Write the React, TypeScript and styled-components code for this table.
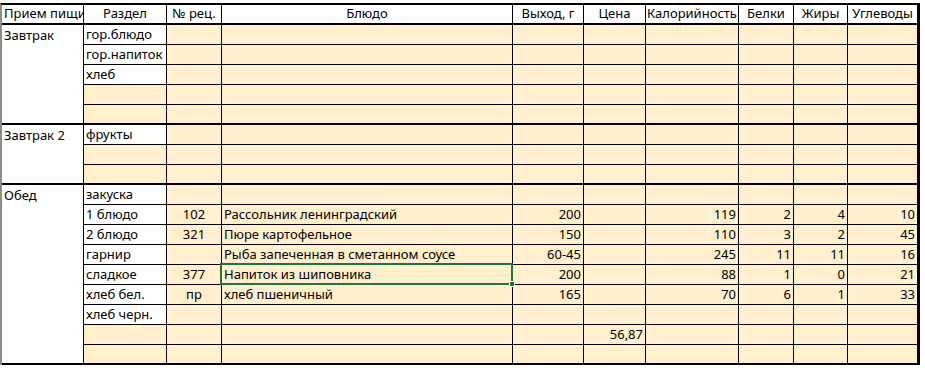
import React from "react";
import styled, { createGlobalStyle } from "styled-components";

type Row = {
    section?: string;
    sectionFilled?: boolean;
    rec?: string;
    dish?: string;
    out?: string;
    price?: string;
    kcal?: string;
    prot?: string;
    fat?: string;
    carb?: string;
    selected?: boolean;
};

type Meal = { name: string; rows: Row[] };

const MEALS: Meal[] = [
    {
        name: "Завтрак",
        rows: [
            { section: "гор.блюдо" },
            { section: "гор.напиток" },
            { section: "хлеб" },
            { sectionFilled: true },
            { sectionFilled: true },
        ],
    },
    {
        name: "Завтрак 2",
        rows: [{ section: "фрукты" }, { sectionFilled: true }, { sectionFilled: true }],
    },
    {
        name: "Обед",
        rows: [
            { section: "закуска" },
            { section: "1 блюдо", rec: "102", dish: "Рассольник ленинградский", out: "200", kcal: "119", prot: "2", fat: "4", carb: "10" },
            { section: "2 блюдо", rec: "321", dish: "Пюре картофельное", out: "150", kcal: "110", prot: "3", fat: "2", carb: "45" },
            { section: "гарнир", dish: "Рыба запеченная в сметанном соусе", out: "60-45", kcal: "245", prot: "11", fat: "11", carb: "16" },
            { section: "сладкое", rec: "377", dish: "Напиток из шиповника", out: "200", kcal: "88", prot: "1", fat: "0", carb: "21", selected: true },
            { section: "хлеб бел.", rec: "пр", dish: "хлеб пшеничный", out: "165", kcal: "70", prot: "6", fat: "1", carb: "33" },
            { section: "хлеб черн." },
            { sectionFilled: true, price: "56,87" },
            { sectionFilled: true },
        ],
    },
];

const HEADERS = ["Раздел", "№ рец.", "Блюдо", "Выход, г", "Цена", "Калорийность", "Белки", "Жиры", "Углеводы"];

const GlobalStyle = createGlobalStyle`
    body {
        margin: 0;
        background: #ffffff;
        font-family: "Noto Sans", "Open Sans", sans-serif;
    }
`;

const App = () => {
    return (
        <>
            <GlobalStyle />
            <Sheet>
                <Cell $align="left" $thick>Прием пищи</Cell>
                {HEADERS.map((h, i) => (
                    <Cell key={h} $align="center" $thick $last={i === HEADERS.length - 1}>
                        {h}
                    </Cell>
                ))}
                {MEALS.map(meal => (
                    <React.Fragment key={meal.name}>
                        <MealCell $span={meal.rows.length}>{meal.name}</MealCell>
                        {meal.rows.map((r, i) => {
                            const thick = i === meal.rows.length - 1;
                            return (
                                <React.Fragment key={i}>
                                    <Cell $fill={!!r.sectionFilled} $thick={thick}>{r.section}</Cell>
                                    <Cell $fill $align="center" $thick={thick}>{r.rec}</Cell>
                                    <Cell $fill $thick={thick}>
                                        {r.dish}
                                        {r.selected && (
                                            <Selection>
                                                <Handle />
                                            </Selection>
                                        )}
                                    </Cell>
                                    <Cell $fill $align="right" $thick={thick}>{r.out}</Cell>
                                    <Cell $fill $align="right" $thick={thick}>{r.price}</Cell>
                                    <Cell $fill $align="right" $thick={thick}>{r.kcal}</Cell>
                                    <Cell $fill $align="right" $thick={thick}>{r.prot}</Cell>
                                    <Cell $fill $align="right" $thick={thick}>{r.fat}</Cell>
                                    <Cell $fill $align="right" $thick={thick} $last>{r.carb}</Cell>
                                </React.Fragment>
                            );
                        })}
                    </React.Fragment>
                ))}
            </Sheet>
        </>
    );
};

export default App;

const Sheet = styled.div`
    display: grid;
    grid-template-columns: 82px 83px 55px 291px 71px 62px 93px 55px 54px 69px;
    grid-auto-rows: 20px;
    width: 920px;
    box-sizing: border-box;
    margin-top: 3px;
    border-top: 2px solid #000;
    border-right: 3px solid #000;
    border-left: 2px solid #8c8c8c;
`;

const Cell = styled.div<{ $align?: "left" | "center" | "right"; $fill?: boolean; $thick?: boolean; $last?: boolean }>`
    position: relative;
    box-sizing: border-box;
    display: flex;
    align-items: flex-end;
    justify-content: ${p => (p.$align === "center" ? "center" : p.$align === "right" ? "flex-end" : "flex-start")};
    padding: 0 2px 1px 2px;
    font-size: 13px;
    line-height: 18px;
    color: #000;
    white-space: nowrap;
    background: ${p => (p.$fill ? "#ffefcc" : "#ffffff")};
    border-right: ${p => (p.$last ? "none" : "1px solid #000")};
    border-bottom: ${p => (p.$thick ? "2px solid #000" : "1px solid #000")};
`;

const MealCell = styled.div<{ $span: number }>`
    grid-column: 1;
    grid-row: span ${p => p.$span};
    box-sizing: border-box;
    padding: 1px 2px 0 2px;
    font-size: 13px;
    line-height: 18px;
    color: #000;
    white-space: nowrap;
    background: #ffffff;
    border-right: 1px solid #000;
    border-bottom: 2px solid #000;
`;

const Selection = styled.div`
    position: absolute;
    z-index: 2;
    left: -2px;
    top: -2px;
    right: -1px;
    bottom: -1px;
    border: 2px solid #217346;
    pointer-events: none;
`;

const Handle = styled.div`
    position: absolute;
    right: -4px;
    bottom: -4px;
    width: 6px;
    height: 6px;
    background: #217346;
    border: 1px solid #ffffff;
    box-sizing: border-box;
`;
